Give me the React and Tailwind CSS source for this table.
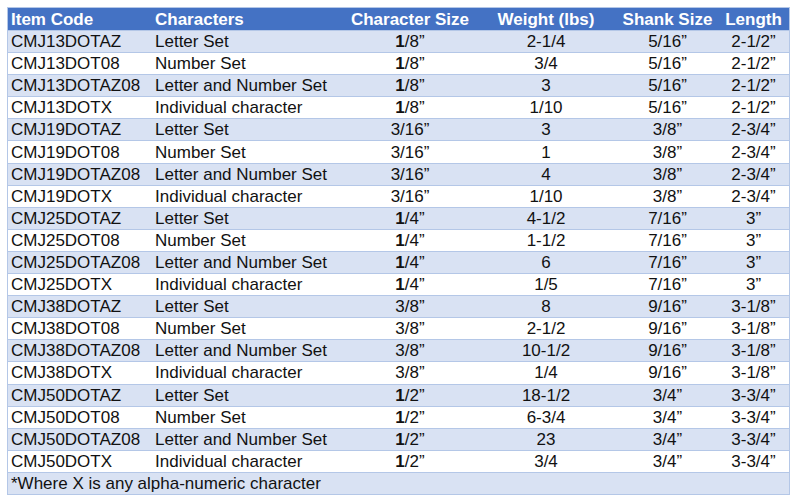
import React from "react";

const rows = [
  ["CMJ13DOTAZ", "Letter Set", "1", "/8”", "2-1/4", "5/16”", "2-1/2”"],
  ["CMJ13DOT08", "Number Set", "1", "/8”", "3/4", "5/16”", "2-1/2”"],
  ["CMJ13DOTAZ08", "Letter and Number Set", "1", "/8”", "3", "5/16”", "2-1/2”"],
  ["CMJ13DOTX", "Individual character", "1", "/8”", "1/10", "5/16”", "2-1/2”"],
  ["CMJ19DOTAZ", "Letter Set", "", "3/16”", "3", "3/8”", "2-3/4”"],
  ["CMJ19DOT08", "Number Set", "", "3/16”", "1", "3/8”", "2-3/4”"],
  ["CMJ19DOTAZ08", "Letter and Number Set", "", "3/16”", "4", "3/8”", "2-3/4”"],
  ["CMJ19DOTX", "Individual character", "", "3/16”", "1/10", "3/8”", "2-3/4”"],
  ["CMJ25DOTAZ", "Letter Set", "1", "/4”", "4-1/2", "7/16”", "3”"],
  ["CMJ25DOT08", "Number Set", "1", "/4”", "1-1/2", "7/16”", "3”"],
  ["CMJ25DOTAZ08", "Letter and Number Set", "1", "/4”", "6", "7/16”", "3”"],
  ["CMJ25DOTX", "Individual character", "1", "/4”", "1/5", "7/16”", "3”"],
  ["CMJ38DOTAZ", "Letter Set", "", "3/8”", "8", "9/16”", "3-1/8”"],
  ["CMJ38DOT08", "Number Set", "", "3/8”", "2-1/2", "9/16”", "3-1/8”"],
  ["CMJ38DOTAZ08", "Letter and Number Set", "", "3/8”", "10-1/2", "9/16”", "3-1/8”"],
  ["CMJ38DOTX", "Individual character", "", "3/8”", "1/4", "9/16”", "3-1/8”"],
  ["CMJ50DOTAZ", "Letter Set", "1", "/2”", "18-1/2", "3/4”", "3-3/4”"],
  ["CMJ50DOT08", "Number Set", "1", "/2”", "6-3/4", "3/4”", "3-3/4”"],
  ["CMJ50DOTAZ08", "Letter and Number Set", "1", "/2”", "23", "3/4”", "3-3/4”"],
  ["CMJ50DOTX", "Individual character", "1", "/2”", "3/4", "3/4”", "3-3/4”"],
];

const cols = "grid grid-cols-[147px_190px_130px_142px_101px_71px]";

export default function App() {
  return (
    <div className="w-[800px] h-[500px] bg-white pt-[7px] pl-[7px]" style={{ fontFamily: '"Liberation Sans", Arial, sans-serif' }}>
      <div className="w-[783px] border border-[#b4c7e7] text-[17px] leading-none text-[#111]">
        <div className={`${cols} h-[22px] items-center bg-[#4472c4] text-white font-bold`}>
          <div className="pl-[3px]">Item Code</div>
          <div>Characters</div>
          <div className="text-center whitespace-nowrap">Character Size</div>
          <div className="text-center">Weight (lbs)</div>
          <div className="text-center">Shank Size</div>
          <div className="text-center">Length</div>
        </div>
        {rows.map((r, i) => (
          <div
            key={r[0]}
            className={`${cols} h-[22.1px] items-center border-t border-[#b4c7e7] ${i % 2 === 0 ? "bg-[#d9e2f3]" : "bg-white"}`}
          >
            <div className="pl-[3px]">{r[0]}</div>
            <div>{r[1]}</div>
            <div className="text-center">
              {r[2] && <span className="font-bold">{r[2]}</span>}
              {r[3]}
            </div>
            <div className="text-center">{r[4]}</div>
            <div className="text-center">{r[5]}</div>
            <div className="text-center">{r[6]}</div>
          </div>
        ))}
        <div className="h-[22px] flex items-center border-t border-[#b4c7e7] bg-[#d9e2f3] pl-[3px]">
          *Where X is any alpha-numeric character
        </div>
      </div>
    </div>
  );
}
